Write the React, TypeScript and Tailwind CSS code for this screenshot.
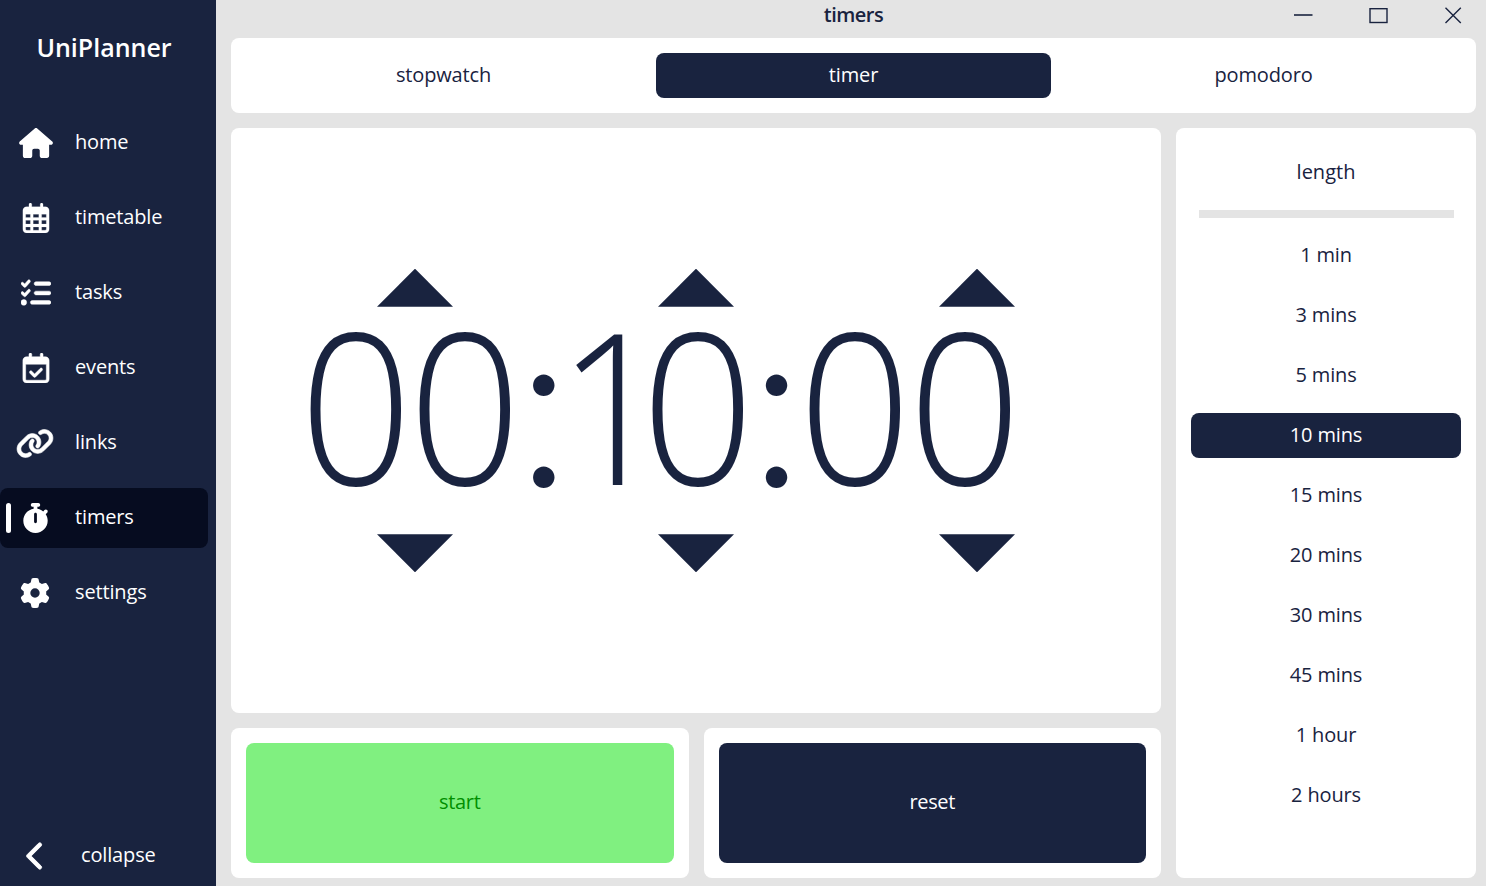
import type { ReactNode } from 'react';
import {
  FaHouse,
  FaRegCalendarDays,
  FaListCheck,
  FaRegCalendarCheck,
  FaLink,
  FaStopwatch,
  FaGear,
  FaChevronLeft,
} from 'react-icons/fa6';

const nav: { label: string; icon: ReactNode }[] = [
  { label: 'home', icon: <FaHouse className="h-[30px] w-[34px]" /> },
  { label: 'timetable', icon: <FaRegCalendarDays className="mr-px h-[30px] w-[28px]" strokeWidth={4} stroke="currentColor" /> },
  { label: 'tasks', icon: <FaListCheck className="h-[30px] w-[30px]" strokeWidth={8} stroke="currentColor" /> },
  { label: 'events', icon: <FaRegCalendarCheck className="mr-px h-[30px] w-[28px]" strokeWidth={8} stroke="currentColor" /> },
  { label: 'links', icon: <FaLink className="mr-0.5 h-[31px] w-[38px]" strokeWidth={10} stroke="currentColor" /> },
  { label: 'timers', icon: <FaStopwatch className="mr-0.5 h-[30px] w-[27px]" /> },
  { label: 'settings', icon: <FaGear className="mr-0.5 h-[30px] w-[30px]" /> },
];

const tabs = ['stopwatch', 'timer', 'pomodoro'];

const lengths = ['1 min', '3 mins', '5 mins', '10 mins', '15 mins', '20 mins', '30 mins', '45 mins', '1 hour', '2 hours'];

const zero = { char: '0', cell: 'w-[109.5px]', glyph: 'scale-x-[0.945]' };
const one = { char: '1', cell: 'w-[75.8px]', glyph: 'translate-x-[7px] scale-x-[0.93]' };
const colon = { char: ':', cell: 'w-[47.6px]', glyph: "font-['Lato',sans-serif] text-[232px] font-light -translate-y-[8.5px]" };
const glyphs = [zero, zero, colon, one, zero, colon, zero, zero];

function Arrows({ down = false }: { down?: boolean }) {
  return (
    <div className="ml-[146px] flex gap-[205.2px]">
      {[0, 1, 2].map((i) => (
        <svg key={i} className="h-[38px] w-[76px] shrink-0" viewBox="0 0 76 38" fill="#19233f">
          <path d={down ? 'M0 0.3H76L38 38.3Z' : 'M38 -0.3L76 37.7H0Z'} />
        </svg>
      ))}
    </div>
  );
}

function Sidebar() {
  return (
    <aside className="flex w-[216px] shrink-0 flex-col bg-[#19233f] text-white">
      <h1 className="flex h-[113px] justify-center pt-[29px] pr-2 text-[25px] leading-9 font-semibold tracking-normal">UniPlanner</h1>
      <nav className="flex flex-col gap-[15px]">
        {nav.map(({ label, icon }) => {
          const active = label === 'timers';
          return (
            <div
              key={label}
              className={`flex h-[60px] w-[208px] items-center rounded-lg ${active ? 'bg-[#060c20]' : ''}`}
            >
              <span className={`ml-1.5 h-[30px] w-[5px] rounded-full ${active ? 'bg-white' : ''}`} />
              <span className="flex w-[50px] justify-center">{icon}</span>
              <span className="ml-3.5 pb-0.5">{label}</span>
            </div>
          );
        })}
      </nav>
      <div className="mt-auto flex h-[60px] items-center">
        <FaChevronLeft className="ml-6 h-[30px] w-6" strokeWidth={16} stroke="currentColor" />
        <span className="ml-[33px] pb-0.5">collapse</span>
      </div>
    </aside>
  );
}

function TitleBar() {
  return (
    <header className="grid h-[38px] grid-cols-[1fr_auto_1fr] pl-[15px] pr-2.5">
      <span />
      <span className="text-xl leading-[29px] font-semibold tracking-[-0.5px]">timers</span>
      <div className="flex justify-end gap-[56px] pt-1.5 pr-[13px]">
        <svg className="size-[19px]" viewBox="0 0 19 19" stroke="#19233f" strokeWidth="1.6">
          <path d="M0 9H18.5" />
        </svg>
        <svg className="size-[19px]" viewBox="0 0 19 19" fill="none" stroke="#19233f" strokeWidth="1.4">
          <rect x="1" y="2.7" width="17" height="13.8" />
        </svg>
        <svg className="size-[19px]" viewBox="0 0 19 19" stroke="#19233f" strokeWidth="1.4">
          <path d="M1.5 1.7L16.8 17M16.8 1.7L1.5 17" />
        </svg>
      </div>
    </header>
  );
}

export default function App() {
  return (
    <div className="flex h-[886px] w-[1486px] overflow-hidden bg-[#e4e4e4] font-['Open_Sans','Noto_Sans',sans-serif] text-xl tracking-[-0.15px] text-[#19233f]">
      <Sidebar />
      <main className="flex min-w-0 flex-1 flex-col">
        <TitleBar />
        <div className="flex flex-1 flex-col gap-[15px] pr-2.5 pb-2 pl-[15px]">
          <div className="grid h-[75px] grid-cols-3 gap-[15px] rounded-lg bg-white p-[15px]">
            {tabs.map((t) => (
              <div
                key={t}
                className={`flex items-center justify-center rounded-lg pb-0.5 ${t === 'timer' ? 'bg-[#19233f] text-white' : ''}`}
              >
                {t}
              </div>
            ))}
          </div>
          <div className="flex flex-1 gap-[15px]">
            <div className="flex flex-1 flex-col gap-[15px]">
              <section className="flex h-[585px] flex-col rounded-lg bg-white pt-[141px]">
                <Arrows />
                <div className="ml-[70px] flex h-[227px] text-[210px] leading-[194px] font-light tracking-normal">
                  {glyphs.map(({ char, cell, glyph }, i) => (
                    <span key={i} className={`flex shrink-0 justify-center ${cell}`}>
                      <span className={glyph}>{char}</span>
                    </span>
                  ))}
                </div>
                <Arrows down />
              </section>
              <div className="grid flex-1 grid-cols-2 gap-[15px]">
                <div className="flex rounded-lg bg-white p-[15px]">
                  <button className="flex-1 rounded-lg bg-[#80f080] pb-0.5 tracking-[-0.35px] text-[#008f00]">start</button>
                </div>
                <div className="flex rounded-lg bg-white p-[15px]">
                  <button className="flex-1 rounded-lg bg-[#19233f] pb-0.5 tracking-[-0.35px] text-white">reset</button>
                </div>
              </div>
            </div>
            <aside className="flex w-[300px] flex-col rounded-lg bg-white px-[15px] pt-[22px]">
              <h2 className="h-[60px] text-center leading-[43px] tracking-normal">length</h2>
              <div className="mx-[7.5px] mb-[15.5px] h-[7.5px] shrink-0 bg-[#e4e4e4]" />
              <ul className="flex flex-col gap-[15px]">
                {lengths.map((l) => (
                  <li
                    key={l}
                    className={`flex h-[45px] items-center justify-center rounded-lg pb-0.5 ${l === '10 mins' ? 'bg-[#19233f] text-white' : ''}`}
                  >
                    {l}
                  </li>
                ))}
              </ul>
            </aside>
          </div>
        </div>
      </main>
    </div>
  );
}
